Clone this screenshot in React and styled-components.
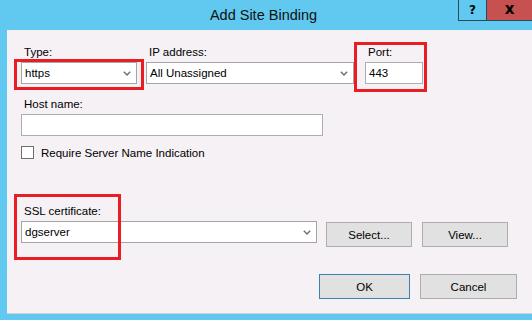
import React from "react";
import styled, { createGlobalStyle } from "styled-components";

const GlobalStyle = createGlobalStyle`
  html, body {
    margin: 0;
    padding: 0;
    width: 532px;
    height: 320px;
    overflow: hidden;
    background: #61c9ef;
  }
  body {
    font-family: "Liberation Sans", Arial, sans-serif;
    font-size: 11.5px;
    color: #000;
  }
`;

const Chevron = () => (
  <svg width="8" height="5" viewBox="0 0 8 5">
    <path d="M0.8 0.8 L4 4 L7.2 0.8" fill="none" stroke="#6d6d6d" strokeWidth="1.4" />
  </svg>
);

const Select = ({ value, width }) => (
  <SelectBox $width={width}>
    <span>{value}</span>
    <Chevron />
  </SelectBox>
);

const App = () => {
  return (
    <>
      <GlobalStyle />
      <Window>
        <TitleBar>
          <Title>Add Site Binding</Title>
          <Controls>
            <HelpButton>?</HelpButton>
            <CloseButton>x</CloseButton>
          </Controls>
        </TitleBar>
        <Frame>
          <Panel>
            <TopRow>
              <Field $box={[-7, 14, 130, 31]}>
                <Label>Type:</Label>
                <Select value="https" width={116} />
              </Field>
              <Field>
                <Label>IP address:</Label>
                <Select value="All Unassigned" width={208} />
              </Field>
              <Field $box={[-11, -3, 73, 50]}>
                <Label>Port:</Label>
                <TextInput $width={58}>443</TextInput>
              </Field>
            </TopRow>

            <Section>
              <Label>Host name:</Label>
              <TextInput $width={302} />
            </Section>

            <CheckRow>
              <CheckBox />
              <span>Require Server Name Indication</span>
            </CheckRow>

            <Field $box={[-7, -10, 107, 66]} $top={45}>
              <Label>SSL certificate:</Label>
              <CertRow>
                <Select value="dgserver" width={296} />
                <Button $width={86}>Select...</Button>
                <Button $width={86}>View...</Button>
              </CertRow>
            </Field>

            <Footer>
              <Button $width={91} $primary>OK</Button>
              <Button $width={97}>Cancel</Button>
            </Footer>
          </Panel>
        </Frame>
      </Window>
    </>
  );
};
export default App;

const Window = styled.div`
  width: 532px;
  height: 320px;
  display: flex;
  flex-direction: column;
  background: #61c9ef;
`;

const TitleBar = styled.div`
  height: 30px;
  display: flex;
  align-items: center;
  justify-content: center;
  position: relative;
  padding-right: 5px;
  box-sizing: border-box;
`;

const Title = styled.div`
  font-size: 14.5px;
  color: #111;
  margin-top: -1px;
`;

const Controls = styled.div`
  position: absolute;
  top: 0;
  right: 0;
  display: flex;
  height: 20px;
  border-left: 1px solid #2a4a58;
  border-bottom: 1px solid #2a4a58;
`;

const HelpButton = styled.div`
  width: 27px;
  display: flex;
  align-items: center;
  justify-content: center;
  font-family: "DejaVu Sans", sans-serif;
  font-weight: bold;
  font-size: 12px;
  border-right: 1px solid #2a4a58;
  color: #000;
`;

const CloseButton = styled.div`
  width: 45px;
  background: #c75050;
  display: flex;
  align-items: center;
  justify-content: center;
  font-family: "DejaVu Sans", sans-serif;
  font-weight: bold;
  font-size: 15px;
  line-height: 1;
  padding-bottom: 2px;
  box-sizing: border-box;
  color: #000;
`;

const Frame = styled.div`
  padding-left: 7px;
`;

const Panel = styled.div`
  height: 284px;
  box-sizing: border-box;
  background: #f5f1f5;
  border-bottom: 1px solid #d4d0d4;
  padding: 15px 0 0 14px;
  display: flex;
  flex-direction: column;
`;

const TopRow = styled.div`
  display: flex;
  gap: 9px;
  & > *:last-child {
    margin-left: 2px;
  }
`;

const Field = styled.div`
  position: relative;
  display: flex;
  flex-direction: column;
  margin-top: ${(p) => p.$top || 0}px;
  ${(p) =>
    p.$box &&
    `
    &::after {
      content: "";
      position: absolute;
      left: ${p.$box[0]}px;
      top: ${p.$box[1]}px;
      width: ${p.$box[2]}px;
      height: ${p.$box[3]}px;
      border: 3px solid #ea1c24;
      box-sizing: border-box;
      pointer-events: none;
    }
  `}
`;

const Label = styled.div`
  height: 14px;
  line-height: 14px;
  padding-left: 3px;
  margin-bottom: 3px;
`;

const SelectBox = styled.div`
  width: ${(p) => p.$width}px;
  height: 22px;
  box-sizing: border-box;
  background: #fff;
  border: 1px solid #a5a5a5;
  display: flex;
  align-items: center;
  justify-content: space-between;
  padding: 0 5px 0 3px;
`;

const TextInput = styled.div`
  width: ${(p) => p.$width}px;
  height: 22px;
  box-sizing: border-box;
  background: #fff;
  border: 1px solid #abadb3;
  display: flex;
  align-items: center;
  padding-left: 3px;
`;

const Section = styled.div`
  display: flex;
  flex-direction: column;
  margin-top: 13px;
`;

const CheckRow = styled.div`
  display: flex;
  align-items: center;
  gap: 7px;
  margin-top: 10px;
  height: 13px;
`;

const CheckBox = styled.div`
  width: 13px;
  height: 13px;
  box-sizing: border-box;
  border: 1px solid #6f6f6f;
  background: #fff;
`;

const CertRow = styled.div`
  display: flex;
  align-items: flex-start;
  gap: 9px;
  & > button:last-child {
    margin-left: 1px;
  }
`;

const Button = styled.button`
  width: ${(p) => p.$width}px;
  height: 25px;
  margin-top: 1px;
  box-sizing: border-box;
  background: #e1e1e1;
  border: 1px solid ${(p) => (p.$primary ? "#3c7fb1" : "#adadad")};
  font-family: "Liberation Sans", Arial, sans-serif;
  font-size: 11.5px;
  color: #000;
  padding: 0;
`;

const Footer = styled.div`
  display: flex;
  gap: 10px;
  margin-top: 26px;
  padding-left: 298px;
`;
